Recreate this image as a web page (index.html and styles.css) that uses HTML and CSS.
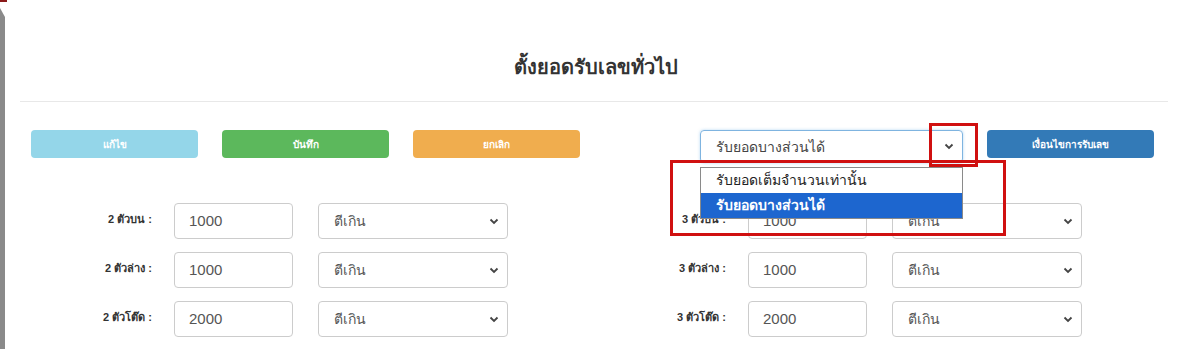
FILE: index.html
```html
<!DOCTYPE html>
<html lang="th">
<head>
    <meta charset="UTF-8">
    <meta name="viewport" content="width=device-width, initial-scale=1.0">
    <title>ตั้งยอดรับเลขทั่วไป</title>
    <link rel="stylesheet" href="styles.css">
</head>
<body>
    <div class="edge">
        <div class="edge_mark"></div>
        <svg class="edge_arrow" width="5" height="14" viewBox="0 0 5 14"><path d="M0 3 L5 12 L5 14 L0 14 Z" fill="#8a8a8a"/></svg>
        <div class="edge_bar"></div>
    </div>
    <div class="page">
        <div class="head">
            <h3 class="title">ตั้งยอดรับเลขทั่วไป</h3>
        </div>

        <div class="tools">
            <div class="tools_left">
                <button class="btn btn_info">แก้ไข</button>
                <button class="btn btn_green">บันทึก</button>
                <button class="btn btn_orange">ยกเลิก</button>
            </div>
            <div class="tools_right">
                <div class="mode">
                    <div class="pick pick_focus">
                        <span>รับยอดบางส่วนได้</span>
                        <svg class="chev" width="10" height="7" viewBox="0 0 10 7"><path d="M1.5 1.5 L5 5 L8.5 1.5" fill="none" stroke="#444" stroke-width="1.8"/></svg>
                    </div>
                    <ul class="menu">
                        <li>รับยอดเต็มจำนวนเท่านั้น</li>
                        <li class="menu_on">รับยอดบางส่วนได้</li>
                    </ul>
                    <div class="mark mark_arrow"></div>
                    <div class="mark mark_menu"></div>
                </div>
                <button class="btn btn_blue">เงื่อนไขการรับเลข</button>
            </div>
        </div>

        <div class="rows">
            <div class="half">
                <div class="row">
                    <label class="lbl">2 ตัวบน :</label>
                    <div class="inp">1000</div>
                    <div class="pick"><span>ตีเกิน</span><svg class="chev" width="10" height="7" viewBox="0 0 10 7"><path d="M1.5 1.5 L5 5 L8.5 1.5" fill="none" stroke="#444" stroke-width="1.8"/></svg></div>
                </div>
                <div class="row">
                    <label class="lbl">2 ตัวล่าง :</label>
                    <div class="inp">1000</div>
                    <div class="pick"><span>ตีเกิน</span><svg class="chev" width="10" height="7" viewBox="0 0 10 7"><path d="M1.5 1.5 L5 5 L8.5 1.5" fill="none" stroke="#444" stroke-width="1.8"/></svg></div>
                </div>
                <div class="row">
                    <label class="lbl">2 ตัวโต๊ด :</label>
                    <div class="inp">2000</div>
                    <div class="pick"><span>ตีเกิน</span><svg class="chev" width="10" height="7" viewBox="0 0 10 7"><path d="M1.5 1.5 L5 5 L8.5 1.5" fill="none" stroke="#444" stroke-width="1.8"/></svg></div>
                </div>
            </div>
            <div class="half">
                <div class="row">
                    <label class="lbl">3 ตัวบน :</label>
                    <div class="inp">1000</div>
                    <div class="pick"><span>ตีเกิน</span><svg class="chev" width="10" height="7" viewBox="0 0 10 7"><path d="M1.5 1.5 L5 5 L8.5 1.5" fill="none" stroke="#444" stroke-width="1.8"/></svg></div>
                </div>
                <div class="row">
                    <label class="lbl">3 ตัวล่าง :</label>
                    <div class="inp">1000</div>
                    <div class="pick"><span>ตีเกิน</span><svg class="chev" width="10" height="7" viewBox="0 0 10 7"><path d="M1.5 1.5 L5 5 L8.5 1.5" fill="none" stroke="#444" stroke-width="1.8"/></svg></div>
                </div>
                <div class="row">
                    <label class="lbl">3 ตัวโต๊ด :</label>
                    <div class="inp">2000</div>
                    <div class="pick"><span>ตีเกิน</span><svg class="chev" width="10" height="7" viewBox="0 0 10 7"><path d="M1.5 1.5 L5 5 L8.5 1.5" fill="none" stroke="#444" stroke-width="1.8"/></svg></div>
                </div>
            </div>
        </div>
    </div>
</body>
</html>
```

FILE: styles.css
```css
body {
    margin: 0;
    display: flex;
    background: #fff;
    font-family: "Liberation Sans", Tahoma, sans-serif;
    color: #333;
    overflow: hidden;
}
.edge {
    flex: 0 0 5px;
    width: 5px;
    display: flex;
    flex-direction: column;
}
.edge_mark {
    width: 7px;
    height: 2px;
    background: #8b1a1a;
}
.edge_arrow {
    display: block;
    margin-top: 3px;
}
.edge_bar {
    width: 5px;
    height: 340px;
    background: #8a8a8a;
}
.page {
    flex: 1;
    padding-left: 15px;
    padding-right: 10px;
}
.head {
    padding: 50px 0 17px;
    border-bottom: 1px solid #e8e8e8;
    text-align: center;
}
.title {
    margin: 0;
    font-size: 20px;
    line-height: 34px;
    font-weight: bold;
    color: #333;
    padding-left: 4px;
}
.tools {
    display: flex;
    margin-top: 28px;
    height: 33px;
}
.tools_left {
    width: 574px;
    display: flex;
    gap: 24px;
    padding-left: 11px;
    box-sizing: border-box;
}
.tools_right {
    display: flex;
    gap: 24px;
    padding-left: 106px;
}
.btn {
    width: 167px;
    height: 28px;
    border: 1px solid transparent;
    border-radius: 4px;
    color: #fff;
    font-family: Tahoma, "Liberation Sans", sans-serif;
    font-size: 10px;
    font-weight: bold;
    padding: 0;
}
.btn_info {
    background: #94d6e9;
}
.btn_green {
    background: #5cb85c;
}
.btn_orange {
    background: #f0ad4e;
}
.btn_blue {
    background: #337ab7;
}
.mode {
    position: relative;
    width: 263px;
}
.pick {
    height: 36px;
    box-sizing: border-box;
    border: 1px solid #ccc;
    border-radius: 4px;
    display: flex;
    align-items: center;
    justify-content: space-between;
    padding: 0 8px 0 15px;
    font-size: 14px;
    color: #555;
    width: 190px;
}
.pick_focus {
    width: 263px;
    height: 33px;
    border-color: #7fb4e0;
    box-shadow: 0 0 3px rgba(102, 175, 233, 0.5);
    color: #444;
}
.chev {
    display: block;
}
.menu {
    position: absolute;
    left: 0;
    top: 37px;
    width: 263px;
    box-sizing: border-box;
    margin: 0;
    padding: 0;
    list-style: none;
    border: 1px solid #8a8a8a;
    background: #fff;
    font-size: 14px;
    color: #222;
}
.menu li {
    height: 25px;
    line-height: 25px;
    padding-left: 15px;
}
.menu_on {
    background: #1d66cf;
    color: #fff;
    font-weight: bold;
}
.mark {
    position: absolute;
    border: 3px solid #d01010;
    box-sizing: border-box;
}
.mark_arrow {
    left: 229px;
    top: -7px;
    width: 49px;
    height: 44px;
}
.mark_menu {
    left: -30px;
    top: 30px;
    width: 336px;
    height: 76px;
}
.rows {
    display: flex;
    margin-top: 40px;
}
.half {
    width: 574px;
    display: flex;
    flex-direction: column;
    gap: 13px;
}
.row {
    display: flex;
    height: 36px;
}
.lbl {
    width: 132px;
    text-align: right;
    font-family: Tahoma, "Liberation Sans", sans-serif;
    font-size: 11px;
    font-weight: bold;
    color: #333;
    padding-top: 7px;
    margin-right: 22px;
}
.inp {
    width: 119px;
    height: 36px;
    box-sizing: border-box;
    border: 1px solid #ccc;
    border-radius: 4px;
    padding: 0 14px;
    line-height: 34px;
    font-size: 15px;
    color: #555;
    margin-right: 25px;
}
```
